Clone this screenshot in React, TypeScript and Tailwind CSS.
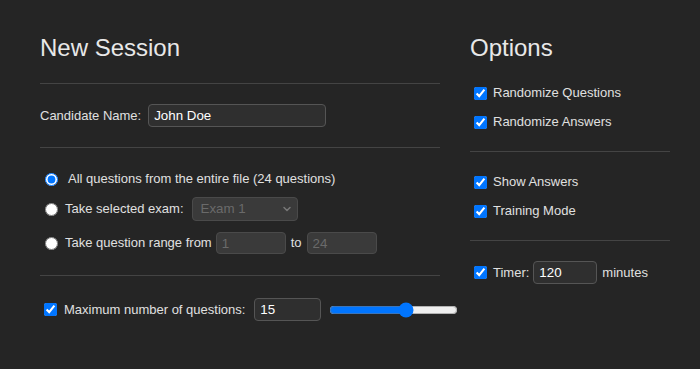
import { ChevronDown } from 'lucide-react';

// Shared styles for the dark text fields
const field =
    'h-[23px] shrink-0 rounded-[4px] border border-[#555] bg-[#2f2f2f] px-[5px] text-[13.33px] text-white outline-none';
const disabledField =
    'h-[22px] shrink-0 rounded-[4px] border border-[#4a4a4a] bg-[#3a3a3a] px-[5px] text-[13.33px] text-[#6a6a6a] outline-none';

function Divider() {
    return <div className="h-px bg-[#444]" />;
}

function Check({ label }: { label: string }) {
    return (
        <label className="flex h-[20px] items-center whitespace-nowrap">
            <input type="checkbox" defaultChecked className="ml-[4px] mr-[6px] h-[13px] w-[13px] shrink-0" />
            <span>{label}</span>
        </label>
    );
}

export default function App() {
    return (
        <div
            className="flex h-[369px] w-full gap-[30px] bg-[#252525] pl-[40px] pt-[33px] text-[13px] text-[#e0e0e0]"
            style={{ fontFamily: '"Liberation Sans", Arial, sans-serif' }}
        >
            {/* New session */}
            <div className="flex w-[400px] shrink-0 flex-col">
                <h1 className="h-[29px] text-[24px] leading-[29px] text-[#e8e8e8]">New Session</h1>
                <div className="mt-[21px]">
                    <Divider />
                </div>

                <div className="mt-[20px] flex items-center gap-[7px] whitespace-nowrap">
                    <span>Candidate Name:</span>
                    <input className={`${field} w-[178px]`} defaultValue="John Doe" />
                </div>

                <div className="mt-[20px]">
                    <Divider />
                </div>

                {/* Question source */}
                <label className="mt-[20px] flex h-[22px] items-center whitespace-nowrap">
                    <input type="radio" name="src" defaultChecked className="ml-[5px] mr-[10px] h-[13px] w-[13px] shrink-0" />
                    <span>All questions from the entire file (24 questions)</span>
                </label>

                <div className="mt-[7px] flex h-[24px] items-center whitespace-nowrap">
                    <input type="radio" name="src" className="ml-[5px] mr-[7px] h-[13px] w-[13px] shrink-0" />
                    <span>Take selected exam:</span>
                    <div className="relative ml-[8px] shrink-0">
                        <select
                            disabled
                            className="h-[24px] w-[106px] appearance-none rounded-[4px] border border-[#4a4a4a] bg-[#3a3a3a] pl-[8px] text-[13.33px] text-[#6a6a6a] outline-none"
                        >
                            <option>Exam 1</option>
                        </select>
                        <ChevronDown
                            className="pointer-events-none absolute right-[5px] top-[6px] h-[12px] w-[12px] text-[#777]"
                            strokeWidth={3}
                        />
                    </div>
                </div>

                <div className="mt-[11px] flex h-[22px] items-center whitespace-nowrap">
                    <input type="radio" name="src" className="ml-[5px] mr-[7px] h-[13px] w-[13px] shrink-0" />
                    <span>Take question range from</span>
                    <input disabled className={`${disabledField} ml-[4px] w-[70px]`} defaultValue="1" />
                    <span className="mx-[5px]">to</span>
                    <input disabled className={`${disabledField} w-[70px]`} defaultValue="24" />
                </div>

                <div className="mt-[21px]">
                    <Divider />
                </div>

                <div className="mt-[22px] flex h-[23px] items-center whitespace-nowrap">
                    <input type="checkbox" defaultChecked className="ml-[4px] mr-[7px] h-[13px] w-[13px] shrink-0" />
                    <span>Maximum number of questions:</span>
                    <input className={`${field} ml-[9px] w-[67px]`} defaultValue="15" />
                    <input type="range" min={1} max={24} defaultValue={15} className="ml-[8px] w-[129px] shrink-0" />
                </div>
            </div>

            {/* Options */}
            <div className="flex w-[200px] shrink-0 flex-col">
                <h2 className="h-[29px] text-[24px] leading-[29px] text-[#e8e8e8]">Options</h2>

                <div className="mt-[21px] flex flex-col gap-[9px]">
                    <Check label="Randomize Questions" />
                    <Check label="Randomize Answers" />
                </div>
                <div className="mt-[19px]">
                    <Divider />
                </div>

                <div className="mt-[20px] flex flex-col gap-[9px]">
                    <Check label="Show Answers" />
                    <Check label="Training Mode" />
                </div>
                <div className="mt-[19px]">
                    <Divider />
                </div>

                <div className="mt-[20px] flex h-[23px] items-center whitespace-nowrap">
                    <input type="checkbox" defaultChecked className="ml-[4px] mr-[6px] h-[13px] w-[13px] shrink-0" />
                    <span>Timer:</span>
                    <input className={`${field} ml-[4px] w-[64px]`} defaultValue="120" />
                    <span className="ml-[5px]">minutes</span>
                </div>
            </div>
        </div>
    );
}
